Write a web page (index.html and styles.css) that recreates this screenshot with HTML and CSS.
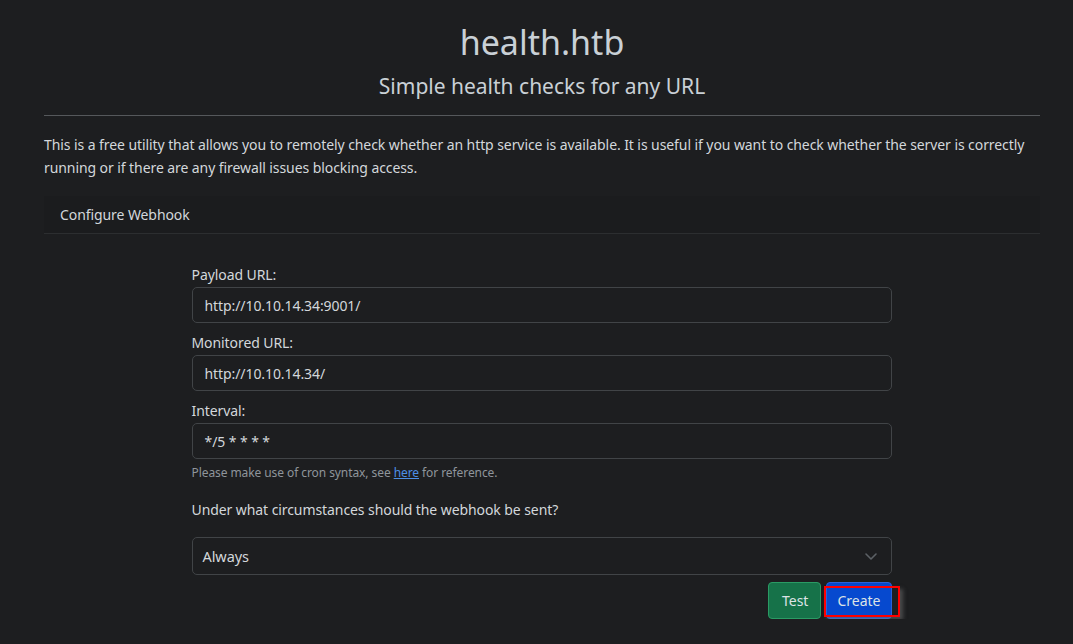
FILE: index.html
```html
<!DOCTYPE html>
<html lang="en">
<head>
<meta charset="utf-8">
<title>health.htb</title>
<link rel="stylesheet" href="styles.css">
</head>
<body>
<div class="container">
  <header class="hero">
    <h1 class="title">health.htb</h1>
    <p class="subtitle">Simple health checks for any URL</p>
  </header>
  <hr class="rule">
  <p class="intro">This is a free utility that allows you to remotely check whether an http service is available. It is useful if you want to check whether the server is correctly running or if there are any firewall issues blocking access.</p>
  <section class="card">
    <div class="card-header">Configure Webhook</div>
    <div class="card-body">
      <form class="form">
        <div class="field">
          <label class="label">Payload URL:</label>
          <div class="input">http://10.10.14.34:9001/</div>
        </div>
        <div class="field">
          <label class="label">Monitored URL:</label>
          <div class="input">http://10.10.14.34/</div>
        </div>
        <div class="field">
          <label class="label">Interval:</label>
          <div class="input">*/5 * * * *</div>
          <small class="help">Please make use of cron syntax, see <a class="link" href="#">here</a> for reference.</small>
        </div>
        <div class="field question">
          <label class="label">Under what circumstances should the webhook be sent?</label>
          <div class="input select">
            <span>Always</span>
            <svg class="chev" width="14" height="10" viewBox="0 0 14 10"><path d="M2 3l5 5 5-5" fill="none" stroke="#5c6166" stroke-width="1.6" stroke-linecap="round" stroke-linejoin="round"/></svg>
          </div>
        </div>
        <div class="actions">
          <button type="button" class="btn btn-test">Test</button>
          <button type="button" class="btn btn-create">Create<span class="mark"></span></button>
        </div>
      </form>
    </div>
  </section>
</div>
</body>
</html>
```
FILE: styles.css
```css
* { box-sizing: border-box; }
html, body { margin: 0; padding: 0; }
body {
  background: #1d1e20;
  color: #d3d7db;
  font-family: "Noto Sans", "Open Sans", sans-serif;
  font-size: 14px;
  letter-spacing: -0.08px;
  overflow: hidden;
}
.container {
  width: 996px;
  margin-left: 44px;
}
.hero {
  display: flex;
  flex-direction: column;
  align-items: center;
  padding-top: 22px;
}
.title {
  margin: 0;
  font-size: 34px;
  font-weight: 400;
  line-height: 41px;
  color: #c9d0d6;
  letter-spacing: 0;
}
.subtitle {
  margin: 10px 0 0;
  font-size: 21px;
  line-height: 26px;
  color: #c9d0d6;
  letter-spacing: 0;
}
.rule {
  margin: 16px 0 0;
  border: 0;
  border-top: 1px solid #55585b;
}
.intro {
  margin: 17px 0 0;
  line-height: 23px;
  color: #d3d7db;
}
.card {
  margin-top: 17px;
}
.card-header {
  padding: 8px 16px;
  line-height: 21px;
  background: #1b1c1e;
  border-bottom: 1px solid #2c2e30;
}
.card-body {
  display: flex;
  justify-content: center;
  padding-top: 30px;
}
.form {
  width: 700px;
  margin-left: -1px;
  display: flex;
  flex-direction: column;
}
.field {
  display: flex;
  flex-direction: column;
  margin-bottom: 9px;
}
.label {
  line-height: 21px;
  margin-bottom: 2px;
}
.input {
  height: 36px;
  border: 1px solid #414447;
  border-radius: 5px;
  padding: 0 12px;
  display: flex;
  align-items: center;
  color: #d3d7db;
}
.help {
  margin-top: 5px;
  font-size: 12px;
  line-height: 17px;
  color: #8f959b;
}
.link { color: #4d8fe6; }
.question { margin-top: 9px; }
.question .label { margin-bottom: 17px; }
.select {
  height: 38px;
  padding: 0 10px;
  justify-content: space-between;
  font-size: 14.5px;
}
.chev { margin-right: 3px; }
.actions {
  display: flex;
  justify-content: flex-end;
  gap: 5px;
  margin-top: -2px;
}
.btn {
  font: inherit;
  font-size: 14px;
  height: 37px;
  border-radius: 4px;
  padding: 0 11px;
  color: #dde3e6;
  cursor: pointer;
}
.btn-test {
  background: #167249;
  border: 1px solid #2a9b64;
  padding: 0 12px 0 13px;
}
.btn-create {
  position: relative;
  background: #0649cf;
  border: 1px solid #2a62d6;
  padding: 0 10px;
}
.mark {
  position: absolute;
  left: -3px;
  top: 3px;
  width: 76px;
  height: 31px;
  border: 2px solid #ff0000;
  box-shadow: 3px 3px 4px rgba(120,120,120,0.5);
}
```
